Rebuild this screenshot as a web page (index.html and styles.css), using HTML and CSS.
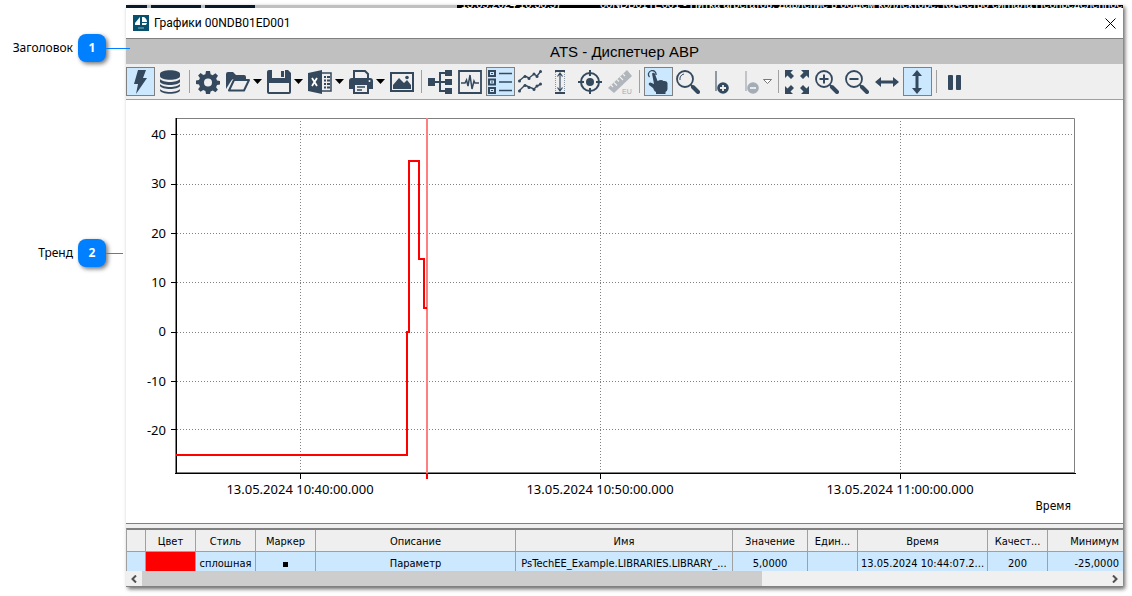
FILE: index.html
```html
<!DOCTYPE html>
<html lang="ru">
<head>
<meta charset="utf-8">
<title>Графики 00NDB01ED001</title>
<link rel="stylesheet" href="styles.css">
</head>
<body>
<div class="page">
  <aside class="callouts">
    <div class="callout"><span>Заголовок</span><b class="badge">1</b><i class="leader leader-long"></i></div>
    <div class="callout"><span>Тренд</span><b class="badge">2</b><i class="leader"></i></div>
  </aside>

  <main class="window">
    <div class="backdrop">
      <i class="tab tab-short"></i><i class="tab"></i><i class="tab"></i>
      <div class="log"><span>13.05.2024 10:30:57</span><span>00NDB01TE001 - Нитка агрегатов. Давление в общем коллекторе. Качество сигнала Неопределенное</span></div>
    </div>
    <header class="titlebar">
      <svg class="logo" viewBox="0 0 16 16"><rect width="16" height="16" fill="#07516f"/><path d="M7 2v8H2V8zM9 2h2c2 1 3 3 3 5H9zM9 8h5l-1 2H9z" fill="#fff"/><path d="M5 13h6" stroke="#8fb4c2" stroke-width="1"/></svg>
      <h1>Графики 00NDB01ED001</h1>
      <button class="close" aria-label="Закрыть"><svg viewBox="0 0 11 11"><path d="M.5.5l10 10M10.500 .5l-10 10" stroke="#000" fill="none"/></svg></button>
    </header>
    <h2 class="caption">ATS - Диспетчер АВР</h2>

    <div class="toolbar" role="toolbar">
      <button class="on" aria-label="Оперативный режим"><svg viewBox="0 0 24 24"><path d="M10 0h8l-3 8h4L8 24l2-10H6z"/></svg></button>
      <button aria-label="Архив"><svg viewBox="0 0 24 24"><path d="M2 4c0-5 20-5 20 0v2c0 5-20 5-20 0z"/><path d="M2 9c3 4 17 4 20 0v3c-2 4-18 4-20 0zM2 14c3 4 17 4 20 0v2c-2 4-18 4-20 0zM2 19c3 4 17 4 20 0v1c0 5-20 5-20 0z"/></svg></button>
      <i class="sep"></i>
      <button aria-label="Настройки"><svg viewBox="0 0 24 24"><path fill-rule="evenodd" d="M10 1h4l.6 3.300 2 .9L19.500 3.200l2.500 2.600-1.800 2.700.8 2 3 .6v3.400l-3 .6-.9 2.200 1.800 2.500-2.500 2.500-2.600-1.800-2.200.9L14 24h-4l-.6-3.100-2.200-.9-2.600 1.800L2.100 19.300l1.800-2.500L3 14.600l-3-.6v-3.400l3-.6.9-2L2.100 5.600 4.600 3.100l2.700 1.900 2.100-.8zM12 8.500a4 4 0 1 0 0 8 4 4 0 0 0 0-8z"/></svg></button>
      <button aria-label="Открыть"><svg viewBox="0 0 24 24"><path d="M0 4q0-2 2-2h5l3 3h8q2 0 2 2v2H8q-2 0-3 2L0 19z"/><path d="M8 10h15L18 20.500H3z" fill="none" stroke="#34495e" stroke-width="2" stroke-linejoin="round"/></svg></button>
      <button class="drop" aria-label="Открыть: меню"><svg viewBox="0 0 9 5"><path d="M0 0h9L4.500 5z" fill="#000"/></svg></button>
      <button aria-label="Сохранить"><svg viewBox="0 0 24 24"><path d="M2 0h19l3 3v19q0 2-2 2H2q-2 0-2-2V2q0-2 2-2z"/><path d="M5 0h13v8H5zM2 13h20v9H2z" fill="#efefef"/><path d="M14 1h3v6h-3z"/></svg></button>
      <button class="drop" aria-label="Сохранить: меню"><svg viewBox="0 0 9 5"><path d="M0 0h9L4.500 5z" fill="#000"/></svg></button>
      <button aria-label="Экспорт в Excel"><svg viewBox="0 0 24 24"><path d="M0 3l14-3v24L0 21z"/><path d="M14 3h9v18h-9" fill="none" stroke="#34495e" stroke-width="1.500"/><path d="M16 7h2M16 10.500h2M16 14h2M16 17.500h2M19 7h3M19 10.500h3M19 14h3M19 17.500h3" stroke="#34495e" stroke-width="2"/><path d="M4 8l5 8M9 8l-5 8" stroke="#fff" stroke-width="1.800"/></svg></button>
      <button class="drop" aria-label="Экспорт: меню"><svg viewBox="0 0 9 5"><path d="M0 0h9L4.500 5z" fill="#000"/></svg></button>
      <button aria-label="Печать"><svg viewBox="0 0 24 24"><path d="M5 8V1h11l3 3v4" fill="none" stroke="#34495e" stroke-width="2"/><path d="M3 8h18q3 0 3 3v8h-4v-5H4v5H0v-8q0-3 3-3z"/><circle cx="20.500" cy="11" r="1" fill="#efefef"/><path d="M5 14h14v9H5z" fill="#efefef" stroke="#34495e" stroke-width="2"/><path d="M8 17h8M8 20h5" stroke="#34495e" stroke-width="1.400"/></svg></button>
      <button class="drop" aria-label="Печать: меню"><svg viewBox="0 0 9 5"><path d="M0 0h9L4.500 5z" fill="#000"/></svg></button>
      <button aria-label="Изображение"><svg viewBox="0 0 24 24"><path fill-rule="evenodd" d="M0 2h24v20H0zM2 4v16h20V4z"/><path d="M3 18v-3l6-7 5 5 3-3 4 5v4H3z"/><circle cx="17" cy="7.500" r="1.800"/></svg></button>
      <i class="sep"></i>
      <button aria-label="Дерево"><svg viewBox="0 0 24 24"><path d="M0 8h7v8H0zM17 0h7v6h-7zM17 9h7v6h-7zM17 18h7v6h-7z"/><path d="M6 12h12M18 3h-6v18h6" fill="none" stroke="#34495e" stroke-width="2"/></svg></button>
      <button aria-label="Сигнал"><svg viewBox="0 0 24 24"><path d="M1 1h22v22H1z" fill="none" stroke="#34495e" stroke-width="1.800"/><path d="M3 13h4l1.500-3 1.500 6 2-11 2 14 2-8 1 2h4" fill="none" stroke="#34495e" stroke-width="1.500"/></svg></button>
      <button class="on" aria-label="Легенда"><svg viewBox="0 0 24 24"><path fill="none" stroke="#34495e" stroke-width="2" d="M1 1h6v5H1zM1 9.500h6v5H1zM1 18h6v5H1z"/><path d="M3 3h2v1H3zM3 11.500h2v1H3zM3 20h2v1H3z"/><path d="M11 3.500h13M11 12h13M11 20.500h13" stroke="#34495e" stroke-width="1.600"/></svg></button>
      <button aria-label="Кривые"><svg viewBox="0 0 24 24"><path d="M1 11l6-5 4 2 5-4 3 2 4-5M1 21l6-6 4 2 5 2 3-3 4-2" fill="none" stroke="#34495e" stroke-width="1.400"/><g><circle cx="1.500" cy="11" r="1.500"/><circle cx="7" cy="6.500" r="1.500"/><circle cx="11" cy="8.500" r="1.500"/><circle cx="16" cy="4" r="1.500"/><circle cx="19" cy="6.500" r="1.500"/><circle cx="22.500" cy="1.500" r="1.500"/><circle cx="1.500" cy="21" r="1.500"/><circle cx="7" cy="15.500" r="1.500"/><circle cx="11" cy="17.500" r="1.500"/><circle cx="16" cy="19.500" r="1.500"/><circle cx="19" cy="16" r="1.500"/><circle cx="22.500" cy="14" r="1.500"/></g></svg></button>
      <button aria-label="Шкала"><svg viewBox="0 0 24 24"><path d="M7 1h10M7 23h10" stroke="#34495e" stroke-width="2"/><path d="M12 3v18M9.500 6.500L12 3l2.500 3.500M9.500 17.500L12 21l2.500-3.500" fill="none" stroke="#34495e" stroke-width="1.200"/><path d="M7.500 2v20M16.500 2v20" stroke="#8995a1" stroke-dasharray="1 1"/></svg></button>
      <button aria-label="Центрировать"><svg viewBox="0 0 24 24"><circle cx="12" cy="12" r="9" fill="none" stroke="#34495e" stroke-width="2"/><circle cx="12" cy="12" r="4"/><path d="M12 0v6M12 18v6M0 12h6M18 12h6" stroke="#34495e" stroke-width="2"/></svg></button>
      <button class="off" disabled aria-label="Единицы измерения"><svg viewBox="0 0 24 24"><path fill="#b0b6bc" d="M0 18L19 0l5 6L6 23z"/><path d="M3 15l2 2M6 12.500l3 3M9 9.500l2 2M12 7l3 3M15 4l2 2" stroke="#efefef" stroke-width="1.200"/><text x="14" y="23.500" font-size="7" fill="#a4abb2">EU</text></svg></button>
      <i class="sep"></i>
      <button class="on" aria-label="Рука"><svg viewBox="0 0 24 24"><path d="M6 3.500q2-1.500 3 .5l2.500 7q4-2 6 0 3.500-.5 4 2V19q0 2-2 3v2H10v-2q-2-1-3-4l-4-3q-1-2.500 1.500-2.500L8 14z"/><path d="M3.500 7A3.800 3.800 0 1 1 10 5" fill="none" stroke="#34495e" stroke-width="1.300"/></svg></button>
      <button aria-label="Лупа"><svg viewBox="0 0 24 24"><circle cx="9" cy="9" r="8" fill="none" stroke="#34495e" stroke-width="1.800"/><path d="M4 10a5 5 0 0 1 4-6" fill="none" stroke="#34495e"/><path d="M15 15l2 2" stroke="#34495e" stroke-width="2"/><path d="M17 17l5 5" stroke="#34495e" stroke-width="4" stroke-linecap="round"/></svg></button>
      <button aria-label="Добавить маркер"><svg viewBox="0 0 24 24"><path d="M10 1v20" stroke="#6d7c8b" stroke-width="1.500"/><circle cx="17" cy="18" r="5.800"/><path d="M17 15v6M14 18h6" stroke="#efefef" stroke-width="1.800"/></svg></button>
      <button class="off" disabled aria-label="Удалить маркер"><svg viewBox="0 0 24 24"><path d="M10 1v20" stroke="#b0b6bc" stroke-width="1.500"/><circle cx="17" cy="18" r="5.800" fill="#a4adb5"/><path d="M14 18h6" stroke="#efefef" stroke-width="1.800"/></svg></button>
      <button class="drop" aria-label="Удалить маркер: меню"><svg viewBox="0 0 9 5"><path d="M.5.5h8l-4 4z" fill="#fff" stroke="#777"/></svg></button>
      <i class="sep"></i>
      <button aria-label="Развернуть"><svg viewBox="0 0 24 24"><path d="M0 0h8L5.500 2.500 9 6 6 9 2.500 5.500 0 8zM24 0v8l-2.500-2.500L18 9l-3-3 3.500-3.500L16 0zM0 24v-8l2.500 2.500L6 15l3 3-3.500 3.500L8 24zM24 24h-8l2.500-2.500L15 18l3-3 3.500 3.500L24 16z"/></svg></button>
      <button aria-label="Увеличить"><svg viewBox="0 0 24 24"><circle cx="9" cy="9" r="8" fill="none" stroke="#34495e" stroke-width="1.800"/><path d="M9 4.500v9M4.500 9h9M15 15l2 2" stroke="#34495e" stroke-width="2"/><path d="M17 17l5 5" stroke="#34495e" stroke-width="4" stroke-linecap="round"/></svg></button>
      <button aria-label="Уменьшить"><svg viewBox="0 0 24 24"><circle cx="9" cy="9" r="8" fill="none" stroke="#34495e" stroke-width="1.800"/><path d="M4.500 9h9M15 15l2 2" stroke="#34495e" stroke-width="2"/><path d="M17 17l5 5" stroke="#34495e" stroke-width="4" stroke-linecap="round"/></svg></button>
      <button aria-label="По ширине"><svg viewBox="0 0 24 24"><path d="M0 12l6-5v3.500h12V7l6 5-6 5v-3.500H6V17z"/></svg></button>
      <button class="on" aria-label="По высоте"><svg viewBox="0 0 24 24"><path d="M12 0l5 6h-3.500v12H17l-5 6-5-6h3.500V6H7z"/></svg></button>
      <i class="sep"></i>
      <button aria-label="Пауза"><svg viewBox="0 0 24 24"><rect x="5" y="5" width="5" height="15" rx="1"/><rect x="13" y="5" width="5" height="15" rx="1"/></svg></button>
    </div>

    <section class="chart">
      <div class="y-axis"><span>40</span><span>30</span><span>20</span><span>10</span><span>0</span><span>-10</span><span>-20</span></div>
      <svg class="plot" viewBox="0 0 900 356" preserveAspectRatio="none">
        <path class="grid" d="M1 16.500h898M1 66.500h898M1 115.500h898M1 164.500h898M1 214.500h898M1 263.500h898M1 311.500h898M124.500 0v355M424.500 0v355M724.500 0v355"/>
        <path class="frame" d="M0 .5h898.500V356M-.5 0v356M0 354.500h899"/>
        <path class="axis" d="M.5 0v356M-1 355.500h901M-5 16.500h5M-5 66.500h5M-5 115.500h5M-5 164.500h5M-5 214.500h5M-5 263.500h5M-5 311.500h5M124.500 356v5M424.500 356v5M724.500 356v5"/>
        <path class="cursor" d="M251 0v355"/>
        <path class="trend" d="M0 337h231V214h2V43h10v98h5v49h3M251 355v6"/>
      </svg>
      <div class="x-axis"><span>13.05.2024 10:40:00.000</span><span>13.05.2024 10:50:00.000</span><span>13.05.2024 11:00:00.000</span></div>
      <div class="x-title">Время</div>
    </section>

    <section class="legend">
      <table>
        <colgroup><col class="w19"><col class="w50"><col class="w60"><col class="w60"><col class="w200"><col class="w217"><col class="w75"><col class="w50"><col class="w130"><col class="w60"><col></colgroup>
        <thead><tr><th></th><th>Цвет</th><th>Стиль</th><th>Маркер</th><th>Описание</th><th>Имя</th><th>Значение</th><th>Един...</th><th>Время</th><th>Качест...</th><th class="right">Минимум</th></tr></thead>
        <tbody><tr><td></td><td class="red"></td><td>сплошная</td><td><i class="marker"></i></td><td>Параметр</td><td>PsTechEE_Example.LIBRARIES.LIBRARY_...</td><td>5,0000</td><td></td><td>13.05.2024 10:44:07.2...</td><td>200</td><td class="right">-25,0000</td></tr></tbody>
      </table>
    </section>
    <div class="scrollbar">
      <button aria-label="Влево"><svg viewBox="0 0 6 8"><path d="M5 .5L1.500 4 5 7.500" fill="none" stroke="#505050" stroke-width="2"/></svg></button>
      <div class="track"><div class="thumb"></div></div>
      <button aria-label="Вправо"><svg viewBox="0 0 6 8"><path d="M1 .5L4.500 4 1 7.500" fill="none" stroke="#505050" stroke-width="2"/></svg></button>
    </div>
  </main>
</div>
</body>
</html>
```

FILE: styles.css
```css
* { box-sizing: border-box; }
body { margin: 0; background: #fff; color: #000; font: 11px/14px "DejaVu Sans Condensed", "DejaVu Sans", sans-serif; }
h1, h2 { margin: 0; font-weight: normal; }
button { padding: 0; border: 0; background: none; font: inherit; }
svg { display: block; }

.page { display: flex; height: 100vh; padding: 5px 9px 9px 0; }
.callouts { flex: 0 0 126px; min-width: 0; display: flex; flex-direction: column; gap: 177px; padding-top: 29px; z-index: 1; font: 12px/16px "Noto Sans", sans-serif; }
.callout { display: flex; align-items: center; height: 28px; }
.callout span { flex: none; width: 73px; margin-right: 5px; text-align: right; }
.badge { flex: none; width: 28px; height: 28px; border-radius: 8px; background: #0080ff; color: #fff; text-align: center; line-height: 28px; box-shadow: 2px 2px 4px #0008; }
.leader { flex: none; width: 17px; height: 1px; background: #5a7ea3; }
.leader-long { width: 24px; background: #0080ff; }

.window { flex: 1; min-width: 0; display: flex; flex-direction: column; background: #fff; border-bottom: 1px solid #808080; box-shadow: 2px 2px 4px #0009; }
.backdrop { display: flex; gap: 4px; height: 3px; overflow: hidden; background: #c0c0c0; }
.tab { flex: none; width: 50px; background: #0a1a2c; }
.tab-short { width: 21px; }
.log { flex: 1; display: flex; align-items: flex-end; gap: 38px; margin-left: 198px; padding-left: 4px; background: #000; color: #fff; font: 11px/8px "Liberation Sans", sans-serif; white-space: nowrap; overflow: hidden; }
.titlebar { display: flex; align-items: center; height: 31px; padding: 0 7px; border-bottom: 1px solid #808080; }
.titlebar h1 { flex: 1; margin-left: 5px; font: 12px/16px Roboto, sans-serif; }
.logo { width: 16px; height: 16px; }
.close svg { width: 11px; height: 11px; }
.caption { height: 25px; background: #c0c0c0; text-align: center; font: 15px/25px "Liberation Sans", Arial, sans-serif; }

.toolbar { display: flex; align-items: center; gap: 1px; height: 36px; background: #efefef; border-bottom: 1px solid #a0a0a0; fill: #34495e; }
.toolbar button { flex: none; display: grid; place-items: center; width: 29px; height: 29px; padding-right: 1px; }
.toolbar button svg { width: 24px; height: 24px; }
.toolbar .on { background: #cce8ff; border: 1px solid #808080; }
.toolbar .drop { width: 11px; margin-left: -1px; padding-right: 2px; }
.toolbar .drop svg { width: 9px; height: 5px; }
.toolbar text { font-family: "Liberation Sans", sans-serif; }
.sep { flex: none; width: 1px; height: 23px; margin: 0 3px; background: #a0a0a0; }

.chart { flex: 1; min-height: 0; display: grid; grid-template: minmax(0, 1fr) 23px 26px / 50px minmax(0, 1fr); padding-top: 18px; font: 13px/16px "Noto Sans", sans-serif; }
.y-axis { display: flex; flex-direction: column; justify-content: space-between; padding: 6px 10px 34px 0; line-height: 20px; text-align: right; }
.plot { width: calc(100% - 47px); height: 100%; min-height: 0; overflow: visible; fill: none; }
.plot path { vector-effect: non-scaling-stroke; }
.grid { stroke: #808080; stroke-dasharray: 1 2; }
.frame { stroke: #808080; }
.axis { stroke: #000; }
.cursor { stroke: #ff8080; stroke-width: 2px; }
.trend { stroke: #f00; stroke-width: 2px; }
.x-axis { grid-column: 1 / 3; display: grid; grid-template-columns: repeat(3, 1fr); align-items: end; padding: 0 73px 0 24px; text-align: center; }
.x-title { grid-column: 1 / 3; padding-right: 52px; font: 12px/18px "DejaVu Sans Condensed", sans-serif; text-align: right; }

.legend { padding-top: 4px; border-top: 1px solid #808080; background: #efefef; }
table { width: 100%; table-layout: fixed; border-collapse: separate; border-spacing: 0; border-top: 2px solid #808080; border-left: 1px solid #a0a0a0; }
th, td { padding: 0 2px; border-right: 1px solid #a0a0a0; font-weight: normal; text-align: center; white-space: nowrap; overflow: hidden; }
th { height: 22px; padding-top: 2px; border-bottom: 1px solid #a0a0a0; background: #efefef; }
td { height: 19px; padding-top: 4px; background: #cce8ff; }
.right { padding-right: 4px; border-right: 0; text-align: right; }
.red { background: #f00; }
.marker { display: inline-block; width: 5px; height: 5px; background: #000; }
.w19 { width: 19px; }
.w50 { width: 50px; }
.w60 { width: 60px; }
.w75 { width: 75px; }
.w130 { width: 130px; }
.w200 { width: 200px; }
.w217 { width: 217px; }

.scrollbar { display: flex; height: 15px; background: #f0f0f0; }
.scrollbar button { flex: none; display: grid; place-items: center; width: 16px; }
.scrollbar svg { width: 6px; height: 8px; }
.track { flex: 1; display: flex; }
.thumb { width: 64.3%; background: #cdcdcd; }
```
